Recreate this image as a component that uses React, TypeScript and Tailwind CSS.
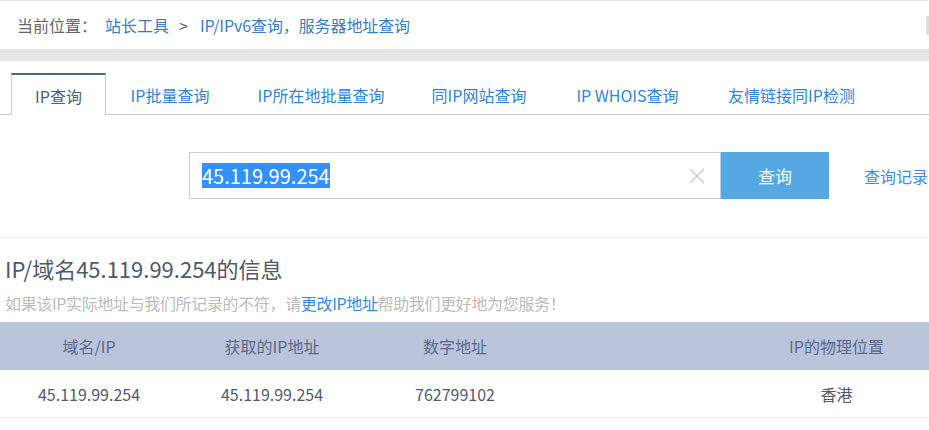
import React from "react";

const font = { fontFamily: '"Microsoft YaHei", "Noto Sans CJK SC", sans-serif' };

const tabs: { t: string; w: string }[] = [
  { t: "IP查询", w: "w-[95px]" },
  { t: "IP批量查询", w: "w-[128px]" },
  { t: "IP所在地批量查询", w: "w-[174px]" },
  { t: "同IP网站查询", w: "w-[142px]" },
  { t: "IP WHOIS查询", w: "w-[155px]" },
  { t: "友情链接同IP检测", w: "w-[173px]" },
];

export default function App() {
  return (
    <div className="w-[929px] h-[430px] bg-white overflow-hidden" style={font}>
      {/* top line */}
      <div className="h-px bg-[#e8e8e8]" />
      {/* breadcrumb */}
      <div className="h-[48px] flex items-center pl-[17px] text-[16px] leading-[24px]">
        <span className="text-[#666666]">当前位置：</span>
        <span className="ml-[8px] text-[#3a7cc2]">站长工具</span>
        <span className="ml-[10px] text-[#666666]">&gt;</span>
        <span className="ml-[12px] text-[#3a7cc2] tracking-[-0.1px]">IP/IPv6查询，服务器地址查询</span>
        <div className="ml-auto w-[3px] h-[19px] bg-[#dddddd]" />
      </div>
      {/* gray band */}
      <div className="h-[12px] bg-[#e6e6e6]" />
      {/* tabs */}
      <div className="mt-[12px] h-[42px] border-b border-[#c5cbdc] pl-[11px] flex">
        {tabs.map((tab, i) =>
          i === 0 ? (
            <div
              key={tab.t}
              className={`${tab.w} h-[42px] -mb-px flex items-center justify-center pt-[2px] border-t-2 border-t-[#56657f] border-x border-x-[#c9ced9] bg-white text-[16px] text-[#4f5b7a] whitespace-nowrap`}
            >
              {tab.t}
            </div>
          ) : (
            <div
              key={tab.t}
              className={`${tab.w} h-[42px] flex items-center justify-center pt-[2px] text-[16px] text-[#2e86d4] whitespace-nowrap`}
            >
              {tab.t}
            </div>
          )
        )}
      </div>
      {/* search */}
      <div className="pt-[37px] pb-[38px] border-b border-[#f0f0f0] flex items-center pl-[189px]">
        <div className="w-[532px] h-[47px] border border-[#c5cde0] flex items-center">
          <span className="ml-[12px] bg-[#3390ff] text-white text-[20px] leading-[25px] h-[25px] flex items-center">
            45.119.99.254
          </span>
          <svg className="ml-auto mr-[15px]" width="16" height="16" viewBox="0 0 16 16">
            <path d="M1 1 L15 15 M15 1 L1 15" stroke="#c8c8c8" strokeWidth="1.4" fill="none" />
          </svg>
        </div>
        <div className="w-[108px] h-[47px] bg-[#56a8e3] text-white text-[17px] flex items-center justify-center">
          查询
        </div>
        <span className="ml-[35px] text-[16px] text-[#3a8ee6] whitespace-nowrap">查询记录</span>
      </div>
      {/* heading */}
      <div className="mt-[15px] pl-[5px] h-[30px] leading-[30px] text-[22px] text-[#51576a] whitespace-nowrap">
        IP/域名45.119.99.254的信息
      </div>
      <div className="mt-[8px] pl-[5px] h-[24px] leading-[24px] text-[16px] tracking-[-0.35px] text-[#bbbbbb] whitespace-nowrap">
        如果该IP实际地址与我们所记录的不符，请<span className="text-[#2f8be6]">更改IP地址</span>帮助我们更好地为您服务！
      </div>
      {/* table */}
      <div className="mt-[7px]">
        <div className="grid grid-cols-[178px_188px_178px_200px_1fr] h-[48px] bg-[#bac5dc] text-[16px] text-[#5b6789] items-center text-center">
          <div>域名/IP</div>
          <div>获取的IP地址</div>
          <div>数字地址</div>
          <div></div>
          <div>IP的物理位置</div>
        </div>
        <div className="grid grid-cols-[178px_188px_178px_200px_1fr] h-[48px] border-b border-[#e6e6e6] text-[16px] text-[#555a66] items-center text-center">
          <div>45.119.99.254</div>
          <div>45.119.99.254</div>
          <div>762799102</div>
          <div></div>
          <div>香港</div>
        </div>
      </div>
    </div>
  );
}
